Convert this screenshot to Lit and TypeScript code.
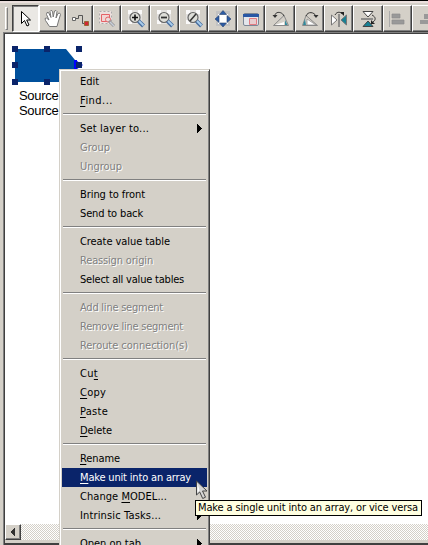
import { LitElement, html, css, svg, nothing } from "lit";
import { customElement, property } from "lit/decorators.js";

const lens = svg`<path d="M2 1h14v14H2z" fill="#e4e2e0"/><path d="M2 1h4v4H2zM12 1h4v4h-4zM2 11h4v4H2z" fill="#fff" opacity=".8"/>
<circle cx="9" cy="8.500" r="5" fill="#deded9" stroke="#666" stroke-width="1.200"/>
<path d="M12.500 12l5 5" stroke="#4a6fa0" stroke-width="4"/><path d="M13 12l4.500 4.500" stroke="#a9cdec" stroke-width="1.800"/>`;

const icons = {
  arrow: svg`<path d="M5.500 2.500v12l3-3 2.500 5.500 2-1-2.300-5h3.800z" fill="#fff" stroke="#000"/>`,
  hand: svg`<path d="M6.500 17.500L2.500 11.500 2 9.500l1.500-.5L6 11 3.500 5.500l.5-2h1.500L8 8.500l-1-6 1-1.200 1.500 1 .7 5.700L11.500 2l1.500-.5 1 1-1 6.500 2-4.500 1.500-.5 1 1.500-2 6.500-1.500 5.500z" fill="#fff" stroke="#777"/>`,
  connector: svg`<path d="M2.500 8.500h3v3h-3z" fill="#fff" stroke="#666"/><path d="M6 9.500h2.500v-3h4v8H14" fill="none" stroke="#555"/><path d="M14.500 12.500h4v4h-4z" fill="#d32635" stroke="#963"/>`,
  area: svg`<path d="M2 2h13v13H2z" fill="#ecdfdd"/><path d="M2.500 2.500h12v12h-12z" fill="none" stroke="#aaa" stroke-dasharray="2 2"/><path d="M4.500 5.500h8v7h-8z" fill="#f1d5d4" stroke="#e56166"/><circle cx="11" cy="10.500" r="2.500" fill="#eadcda" stroke="#e56166"/><path d="M12 12l5 5" stroke="#999" stroke-width="3"/><path d="M13 13l4 4" stroke="#c8cfda" stroke-width="1.500"/>`,
  zoomIn: svg`${lens}<path d="M6 8.500h6M9 5.500v6" stroke="#111" stroke-width="1.600"/>`,
  zoomOut: svg`${lens}<path d="M6 8.500h6" stroke="#333" stroke-width="1.800"/>`,
  zoomOff: svg`${lens}<path d="M6 12l6-7" stroke="#333" stroke-width="1.500"/>`,
  fit: svg`<path d="M3 2h14v15H3z" fill="#c2c2c2"/><path d="M5 5h10v10H5z" fill="#fff"/><path d="M10 1.500l3.500 4h-7zM10 18l3.500-4h-7zM2 10l4-3.500v7zM18 10l-4-3.500v7z" fill="#2c5ca5" stroke="#27406c" stroke-width=".6"/>`,
  window: svg`<rect x="2.500" y="4.500" width="15" height="12" rx="1.500" fill="#e4e6eb" stroke="#7c8796"/><path d="M2 5h16v3H2z" fill="#2857a4"/><path d="M8.500 9.500h7v6h-7z" fill="#e8cecf" stroke="#e27b81"/>`,
  rotateLeft: svg`<path d="M3.500 16.500h15L14 6.500z" fill="#d4d0c8" stroke="#888"/><path d="M5 16l9-3v3z" fill="#fff"/><path d="M15 11l2.500 5H15z" fill="#31899c"/><path d="M5 8C4 2 12 2 14 7" fill="none" stroke="#333"/><path d="M2.500 6h5L5 9z" fill="#333"/>`,
  rotateRight: svg`<path d="M2.500 16.500h15L6 6.500z" fill="#d4d0c8" stroke="#888"/><path d="M16 16L7 10v6z" fill="#fff" stroke="#888" stroke-width=".7"/><path d="M5 10l-2 6h3z" fill="#31899c"/><path d="M6 7c2-5 8-4 10 0" fill="none" stroke="#333"/><path d="M13.500 6h5L16 9z" fill="#333"/>`,
  flipHorizontal: svg`<path d="M2.500 6v10L8 11z" fill="#fff" stroke="#777"/><path d="M17.500 6v10L12 11z" fill="#178194" stroke="#777"/><path d="M10 5v13" stroke="#777" stroke-width="1.500"/><path d="M6 6c2-4 6-3 7-1" fill="none" stroke="#333"/><path d="M11 3h4v4z" fill="#222"/>`,
  flipVertical: svg`<path d="M5 2.500h10L10 8z" fill="#fff" stroke="#444"/><path d="M5 17.500h10L10 12z" fill="#178194" stroke="#444"/><path d="M3 10h12" stroke="#777" stroke-width="1.500"/><path d="M14 6c4 2 4 5 1 7" fill="none" stroke="#333"/><path d="M13 11v4h4z" fill="#222"/>`,
  alignLeft: svg`<path d="M1.500 2v16" stroke="#aaa"/><path d="M4 5h8v4H4zM4 11h12v4H4z" fill="#999" stroke="#8d8d8d" stroke-width=".7"/>`,
  alignCenter: svg`<path d="M7 5h8v5H7zM3 11h15v4H3z" fill="#999"/>`,
};

const buttons: [keyof typeof icons, number][] = [
  ["arrow", 27], ["hand", 27], ["connector", 27], ["area", 28], ["zoomIn", 29],
  ["zoomOut", 29], ["zoomOff", 29], ["fit", 29], ["window", 28], ["rotateLeft", 30],
  ["rotateRight", 29], ["flipHorizontal", 29], ["flipVertical", 30], ["alignLeft", 29], ["alignCenter", 29],
];

interface Entry { label: string; width: number; key?: string; off?: boolean; sub?: boolean; hot?: boolean }
const groups: Entry[][] = [
  [{ label: "Edit", width: 19 }, { label: "Find...", width: 33, key: "F" }],
  [{ label: "Set layer to...", width: 69, sub: true }, { label: "Group", width: 30, off: true }, { label: "Ungroup", width: 42, off: true }],
  [{ label: "Bring to front", width: 65 }, { label: "Send to back", width: 63 }],
  [{ label: "Create value table", width: 90 }, { label: "Reassign origin", width: 73, off: true }, { label: "Select all value tables", width: 104 }],
  [{ label: "Add line segment", width: 83, off: true }, { label: "Remove line segment", width: 103, off: true }, { label: "Reroute connection(s)", width: 108, off: true }],
  [{ label: "Cut", width: 18, key: "t" }, { label: "Copy", width: 26, key: "C" }, { label: "Paste", width: 28, key: "P" }, { label: "Delete", width: 32, key: "D" }],
  [{ label: "Rename", width: 40, key: "R" }, { label: "Make unit into an array", width: 111, key: "M", hot: true }, { label: "Change MODEL...", width: 87, key: "M" }, { label: "Intrinsic Tasks...", width: 81, sub: true }],
  [{ label: "Open on tab", width: 61, sub: true }],
];

/** A label whose tracking is adjusted so that it fills a given width. */
@customElement("fitted-label")
class FittedLabel extends LitElement {
  @property() text = "";
  @property() key = "";
  @property({ type: Number }) fit = 0;
  static styles = css`
    :host { display: inline-block; white-space: nowrap; }
    .mark { text-decoration: underline; text-underline-offset: 2px; text-decoration-thickness: 1px; text-decoration-skip-ink: none; }
  `;
  firstUpdated() {
    const natural = this.getBoundingClientRect().width;
    this.style.letterSpacing = `${(this.fit - natural) / this.text.length}px`;
  }
  render() {
    const i = this.key ? this.text.indexOf(this.key) : -1;
    return i < 0 ? html`${this.text}` : html`${this.text.slice(0, i)}<span class="mark">${this.key}</span>${this.text.slice(i + 1)}`;
  }
}

@customElement("app-root")
class AppRoot extends LitElement {
  static styles = css`
    :host { display: block; position: relative; width: 428px; height: 545px; overflow: hidden; background: #d4d0c8; font: 11px "DejaVu Sans Condensed", "DejaVu Sans", sans-serif; font-stretch: condensed; color: #000; }
    * { box-sizing: border-box; }
    svg { display: block; }
    .window { display: flex; flex-direction: column; height: 545px; border-top: 1px solid #000; }
    .toolbar { display: flex; flex: none; height: 31px; padding: 2px 0 1px 5px; border-top: 2px solid #eadfdc; overflow: hidden; }
    .grip { flex: none; width: 3px; height: 23px; margin: 2px 4px 0 0; border: 1px solid; border-color: #fff #808080 #808080 #fff; }
    .tool { flex: none; display: grid; place-items: center; height: 27px; border: 1px solid; border-color: #fff #404040 #404040 #fff; box-shadow: inset -1px -1px #808080; }
    .tool.on { background: #eae8e4; border-color: #404040 #fff #fff #404040; box-shadow: inset 1px 1px #808080; }
    .w27 { width: 27px; } .w28 { width: 28px; } .w29 { width: 29px; } .w30 { width: 30px; }
    .frame { flex: 1; min-height: 0; margin-left: 3px; border: solid #808080; border-width: 1px 0 0 1px; display: flex; }
    .pane { flex: 1; display: flex; flex-direction: column; border: solid #404040; border-width: 1px 0 2px 1px; background: #fff; min-width: 0; }
    .canvas { flex: 1; min-height: 0; padding: 11px 0 0 4px; }
    .captions { margin: 1px 0 0 10px; font: 13px/15px "Liberation Sans", Arial, sans-serif; letter-spacing: -.3px; }
    .scroll { flex: none; display: flex; height: 19px; border-bottom: 3px solid #d4d0c8; background: conic-gradient(#d4d0c8 25%, #fff 0 50%, #d4d0c8 0 75%, #fff 0) 0 0 / 2px 2px; }
    .step { width: 16px; height: 16px; background: #d4d0c8; border: 1px solid; border-color: #fff #404040 #404040 #fff; box-shadow: inset -1px -1px #808080; }
    .menu { position: absolute; left: 59px; top: 69px; width: 151px; height: 490px; padding: 2px; background: #d4d0c8; border: 1px solid; border-color: #d4d0c8 #404040 #404040 #d4d0c8; box-shadow: inset 1px 1px #fff, inset -1px -1px #808080; }
    .item { display: flex; align-items: center; justify-content: space-between; height: 19px; padding: 0 5px 0 18px; line-height: 17px; }
    .hot { background: #0a246a; color: #fff; }
    .off { color: #808080; text-shadow: 1px 1px #fff; }
    .rule { height: 2px; margin: 3px 1px 4px; border-top: 1px solid #808080; border-bottom: 1px solid #fff; }
    .tip { position: absolute; left: 195px; top: 500px; width: 227px; height: 16px; border: 1px solid #000; background: #ffffe1; padding-left: 2px; line-height: 14px; }
    .pointer { position: absolute; left: 196px; top: 480px; }
  `;
  item(e: Entry) {
    return html`<div class="item ${e.hot ? "hot" : ""} ${e.off ? "off" : ""}">
      <fitted-label .text=${e.label} .key=${e.key ?? ""} .fit=${e.width}></fitted-label>
      ${e.sub ? html`<svg width="5" height="9" viewBox="0 0 5 9" shape-rendering="crispEdges"><path d="M0 0l4.500 4.500L0 9z"/></svg>` : nothing}
    </div>`;
  }
  render() {
    return html`
      <div class="window">
        <div class="toolbar"><div class="grip"></div>
          ${buttons.map(([name, w], i) => html`<div class="tool w${w} ${i ? "" : "on"}"><svg width="20" height="20" viewBox="0 0 20 20">${icons[name]}</svg></div>`)}
        </div>
        <div class="frame"><div class="pane">
          <div class="canvas">
            <svg width="80" height="42" viewBox="9 45 80 42">
              <path d="M15 49h51l9 11v22H15z" fill="#00509c"/>
              <path d="M74 60h3v1l6 4-6 4v13h-3z" fill="#00f"/>
              <g fill="#0a246a" shape-rendering="crispEdges">
                ${[[12, 46], [44, 46], [76, 46], [12, 62], [76, 62], [12, 79], [44, 79], [76, 79]].map(([x, y]) => svg`<rect x=${x} y=${y} width="6" height="6"/>`)}
              </g>
            </svg>
            <div class="captions">Source<br>Source</div>
          </div>
          <div class="scroll"><div class="step"><svg width="14" height="14" viewBox="0 0 14 14" shape-rendering="crispEdges"><path d="M8.500 3v8L4.500 7z" fill="#303030"/></svg></div></div>
        </div></div>
      </div>
      <div class="menu">${groups.map((g, i) => html`${i ? html`<div class="rule"></div>` : nothing}${g.map((e) => this.item(e))}`)}</div>
      <div class="tip"><fitted-label .text=${"Make a single unit into an array, or vice versa"} .fit=${220}></fitted-label></div>
      <svg class="pointer" width="13" height="20" viewBox="0 0 13 20"><path d="M.5 1v14l3.200-3 3 6.500 2.800-1.300-3-6.200H11z" fill="#d5d5d5" stroke="#444"/><path d="M1.500 3.500v9l2-2z" fill="#fff"/></svg>
    `;
  }
}
